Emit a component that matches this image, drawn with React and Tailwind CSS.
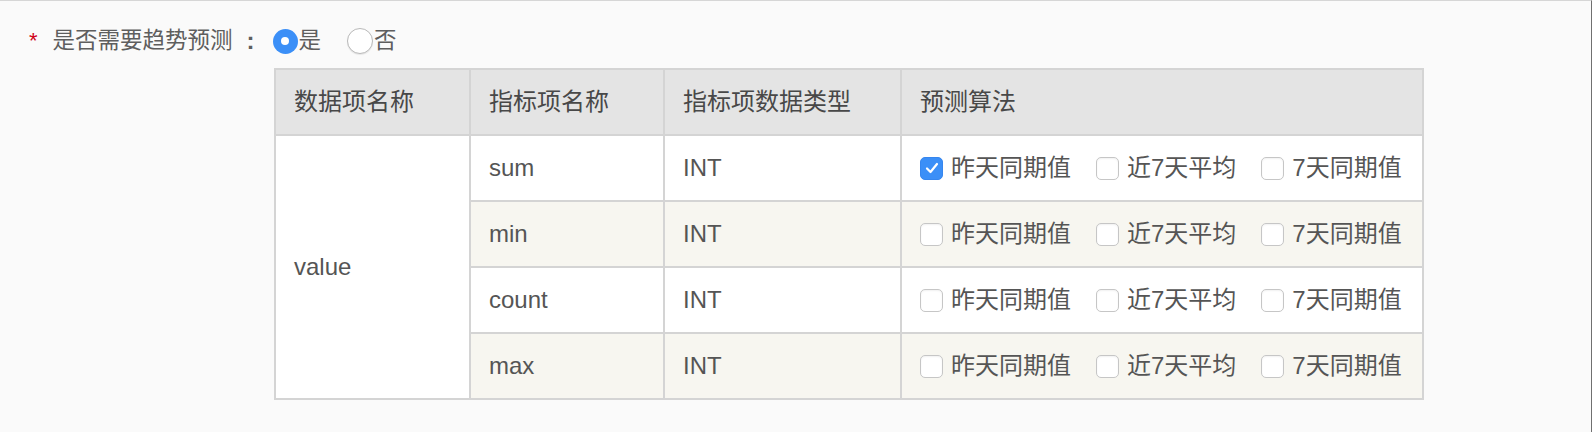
import React, { useState } from "react";

const rows = [
  { name: "sum", type: "INT", checked: [true, false, false] },
  { name: "min", type: "INT", checked: [false, false, false] },
  { name: "count", type: "INT", checked: [false, false, false] },
  { name: "max", type: "INT", checked: [false, false, false] },
];

const algos = ["昨天同期值", "近7天平均", "7天同期值"];

const Checkbox = ({ checked, label, onChange }) => (
  <label className="flex items-center gap-[8px] cursor-pointer select-none">
    <span
      onClick={onChange}
      className={
        checked
          ? "flex items-center justify-center w-[23px] h-[23px] rounded-[5px] bg-[#3b8ff7] border border-[#3686ee]"
          : "flex items-center justify-center w-[23px] h-[23px] rounded-[5px] bg-white border border-[#c6c6c6] shadow-[inset_0_1px_2px_rgba(0,0,0,0.06)]"
      }
    >
      {checked && (
        <svg width="14" height="12" viewBox="0 0 14 12" fill="none">
          <polyline
            points="2,6.5 5.5,10 12,2"
            stroke="white"
            strokeWidth="2.2"
            strokeLinecap="round"
            strokeLinejoin="round"
          />
        </svg>
      )}
    </span>
    <span onClick={onChange}>{label}</span>
  </label>
);

const Radio = ({ checked, label, onClick }) => (
  <span className="flex items-center cursor-pointer select-none" onClick={onClick}>
    {checked ? (
      <span className="flex items-center justify-center w-[25px] h-[25px] rounded-full bg-[#3b8ff7]">
        <span className="w-[8px] h-[8px] rounded-full bg-white" />
      </span>
    ) : (
      <span className="w-[26px] h-[26px] rounded-full bg-white border border-[#b9b9b9] shadow-[0_1px_1px_rgba(0,0,0,0.08)]" />
    )}
    <span className="ml-[1px]">{label}</span>
  </span>
);

export default function App() {
  const [trend, setTrend] = useState(true);
  const [data, setData] = useState(rows);

  const toggle = (ri, ai) => {
    setData((prev) =>
      prev.map((r, i) =>
        i === ri ? { ...r, checked: r.checked.map((c, j) => (j === ai ? !c : c)) } : r
      )
    );
  };

  return (
    <div className="min-h-[432px] bg-[#fafafa] border-t border-[#d6d6d6] border-r border-r-[#707070] font-['Liberation_Sans','Noto_Sans_CJK_SC',sans-serif]">
      {/* 趋势预测 */}
      <div className="flex items-center h-[32px] mt-[24px] pl-[29px] text-[22.5px] text-[#5e5e5e]">
        <span className="text-[#d0021b] mr-[15px] text-[22px] leading-none">*</span>
        <span>是否需要趋势预测</span>
        <span className="ml-[14px] mr-[18px] text-[24px] font-bold">:</span>
        <Radio checked={trend} label="是" onClick={() => setTrend(true)} />
        <span className="w-[26px]" />
        <Radio checked={!trend} label="否" onClick={() => setTrend(false)} />
      </div>

      {trend && (
        <table className="ml-[274px] mt-[11px] w-[1150px] table-fixed border-collapse border-2 border-[#d4d4d4] text-[24px] text-[#555]">
          <colgroup>
            <col className="w-[195px]" />
            <col className="w-[194px]" />
            <col className="w-[237px]" />
            <col />
          </colgroup>
          <thead>
            <tr className="h-[66px] bg-[#e4e4e4] text-[#484848]">
              <th className="border-2 border-[#d4d4d4] px-[18px] text-left font-normal">数据项名称</th>
              <th className="border-2 border-[#d4d4d4] px-[18px] text-left font-normal">指标项名称</th>
              <th className="border-2 border-[#d4d4d4] px-[18px] text-left font-normal">指标项数据类型</th>
              <th className="border-2 border-[#d4d4d4] px-[18px] text-left font-normal">预测算法</th>
            </tr>
          </thead>
          <tbody>
            {data.map((r, ri) => (
              <tr key={r.name} className={ri % 2 === 1 ? "h-[66px] bg-[#f7f6f0]" : "h-[66px] bg-white"}>
                {ri === 0 && (
                  <td rowSpan={4} className="border-2 border-[#d4d4d4] px-[18px] bg-white">
                    value
                  </td>
                )}
                <td className="border-2 border-[#d4d4d4] px-[18px]">{r.name}</td>
                <td className="border-2 border-[#d4d4d4] px-[18px]">{r.type}</td>
                <td className="border-2 border-[#d4d4d4] px-[18px]">
                  <div className="flex items-center gap-[25px]">
                    {algos.map((a, ai) => (
                      <Checkbox key={a} label={a} checked={r.checked[ai]} onChange={() => toggle(ri, ai)} />
                    ))}
                  </div>
                </td>
              </tr>
            ))}
          </tbody>
        </table>
      )}
    </div>
  );
}
